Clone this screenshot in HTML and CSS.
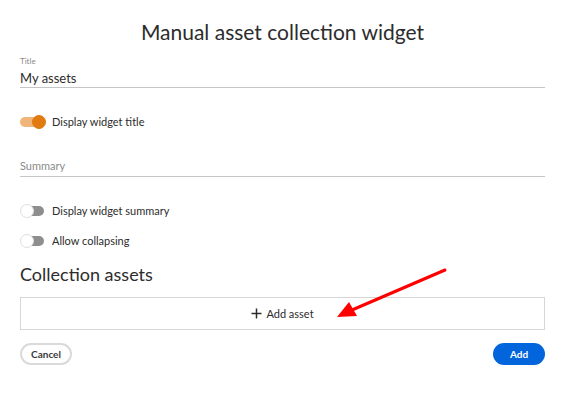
FILE: index.html
```html
<!DOCTYPE html>
<html lang="en">
<head>
<meta charset="utf-8">
<title>Manual asset collection widget</title>
<link rel="stylesheet" href="styles.css">
</head>
<body>
<div class="dialog">
  <h1 class="dialog-title">Manual asset collection widget</h1>

  <div class="field field-title">
    <div class="field-label">Title</div>
    <div class="field-input">My assets</div>
  </div>

  <div class="toggle-row row-first">
    <span class="toggle on"><span class="track"></span><span class="thumb"></span></span>
    <span class="toggle-label">Display widget title</span>
  </div>

  <div class="field field-summary">
    <div class="field-input placeholder">Summary</div>
  </div>

  <div class="toggle-row row-second">
    <span class="toggle"><span class="track"></span><span class="thumb"></span></span>
    <span class="toggle-label">Display widget summary</span>
  </div>

  <div class="toggle-row row-third">
    <span class="toggle"><span class="track"></span><span class="thumb"></span></span>
    <span class="toggle-label">Allow collapsing</span>
  </div>

  <h2 class="section-title">Collection assets</h2>

  <div class="add-asset">
    <svg class="plus" width="11" height="11" viewBox="0 0 11 11"><path d="M5.5 0.5v10M0.5 5.5h10" stroke="#2c2c2c" stroke-width="1.5" fill="none"/></svg>
    <span>Add asset</span>
  </div>

  <div class="actions">
    <button class="btn btn-secondary">Cancel</button>
    <button class="btn btn-primary">Add</button>
  </div>

  <svg class="annotation" width="571" height="400" viewBox="0 0 571 400">
    <line x1="445" y1="270" x2="352" y2="310" stroke="#ff0000" stroke-width="3" stroke-linecap="round"/>
    <polygon points="337,317 349,302 357,316" fill="#ff0000"/>
  </svg>
</div>
</body>
</html>
```

FILE: styles.css
```css
html, body {
  margin: 0;
  padding: 0;
  background: #ffffff;
}

body {
  font-family: Lato, "Liberation Sans", sans-serif;
  color: #2c2c2c;
}

.dialog {
  position: relative;
  width: 571px;
  height: 400px;
  box-sizing: border-box;
  padding: 18px 26px 0 20px;
}

.dialog-title {
  margin: 0;
  font-size: 21px;
  line-height: 28px;
  font-weight: 400;
  text-align: center;
  color: #2c2c2c;
}

.field {
  display: flex;
  flex-direction: column;
  border-bottom: 1px solid #c6c6c6;
}

.field-title {
  margin-top: 10px;
  gap: 4px;
  padding-bottom: 1px;
}

.field-label {
  font-size: 8px;
  line-height: 10px;
  color: #8a8a8a;
}

.field-input {
  font-size: 13px;
  line-height: 16px;
  color: #2c2c2c;
}

.field-input.placeholder {
  font-size: 11px;
  color: #8a8a8a;
}

.field-summary {
  margin-top: 28px;
  padding-bottom: 2px;
}

.toggle-row {
  display: flex;
  align-items: center;
  gap: 6px;
  height: 16px;
}

.row-first { margin-top: 26px; }
.row-second { margin-top: 26px; }
.row-third { margin-top: 14px; }

.toggle {
  position: relative;
  width: 26px;
  height: 14px;
  flex: none;
}

.toggle .track {
  position: absolute;
  left: 4px;
  top: 2px;
  width: 20px;
  height: 10px;
  border-radius: 5px;
  background: #8e8e8e;
}

.toggle .thumb {
  position: absolute;
  left: 0;
  top: 0;
  width: 12px;
  height: 12px;
  border-radius: 50%;
  background: #ffffff;
  border: 1px solid #dedede;
}

.toggle.on .track {
  left: 0;
  width: 22px;
  background: #f0b679;
}

.toggle.on .thumb {
  left: 12px;
  background: #e27a12;
  border-color: #e27a12;
}

.toggle-label {
  font-size: 11px;
  line-height: 16px;
  color: #2c2c2c;
}

.section-title {
  margin: 13px 0 0;
  font-size: 18px;
  line-height: 24px;
  font-weight: 400;
  color: #2c2c2c;
}

.add-asset {
  margin-top: 11px;
  height: 33px;
  box-sizing: border-box;
  border: 1px solid #d6d6d6;
  display: flex;
  align-items: center;
  justify-content: center;
  gap: 4px;
  font-size: 11px;
  color: #2c2c2c;
}

.add-asset .plus {
  flex: none;
}

.actions {
  margin-top: 13px;
  display: flex;
  justify-content: space-between;
}

.btn {
  font-family: Lato, "Liberation Sans", sans-serif;
  height: 22px;
  width: 52px;
  border-radius: 11px;
  font-size: 10px;
  font-weight: 700;
  padding: 0;
  box-sizing: border-box;
  cursor: pointer;
}

.btn-secondary {
  background: #ffffff;
  border: 2px solid #dadada;
  color: #3a3a3a;
}

.btn-primary {
  background: #0265dc;
  border: none;
  color: #ffffff;
}

.annotation {
  position: absolute;
  left: 0;
  top: 0;
  pointer-events: none;
}
```
